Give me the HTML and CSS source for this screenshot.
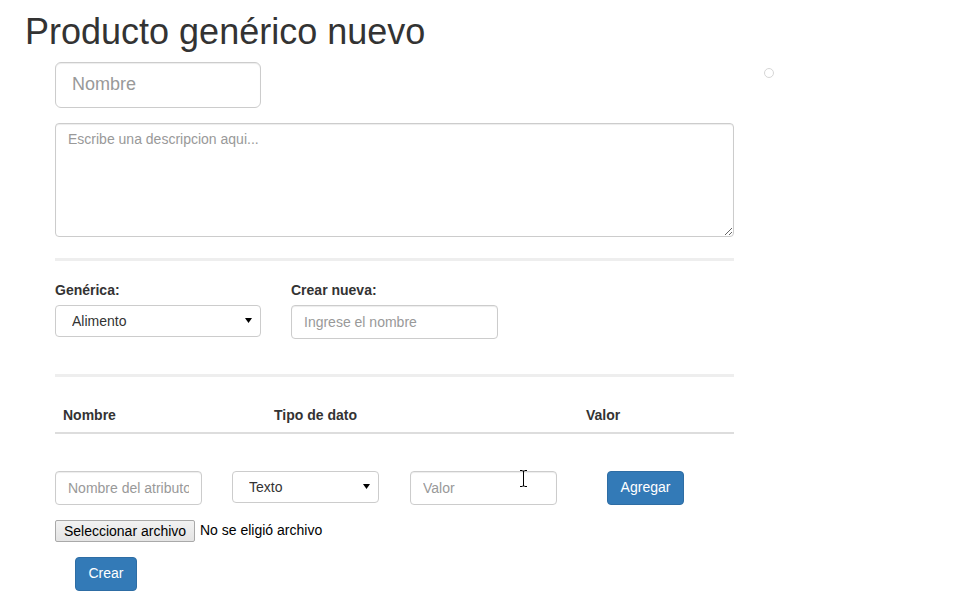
FILE: index.html
```html
<!DOCTYPE html>
<html lang="es">
<head>
<meta charset="utf-8">
<title>Producto genérico nuevo</title>
<link rel="stylesheet" href="styles.css">
</head>
<body>
<h1 class="title">Producto genérico nuevo</h1>
<div class="page">
  <form class="form">
    <input class="form-control input-lg name-input" type="text" placeholder="Nombre">
    <textarea class="form-control desc" placeholder="Escribe una descripcion aqui..."></textarea>
    <div class="sep"></div>
    <div class="pick">
      <div class="pick-col">
        <label class="lbl">Genérica:</label>
        <select class="form-control select sel-gen"><option>Alimento</option></select>
      </div>
      <div class="pick-col">
        <label class="lbl">Crear nueva:</label>
        <input class="form-control new-input" type="text" placeholder="Ingrese el nombre">
      </div>
    </div>
    <div class="sep sep-2"></div>
    <table class="attr-table">
      <thead>
        <tr>
          <th class="c1">Nombre</th>
          <th class="c2">Tipo de dato</th>
          <th class="c3">Valor</th>
        </tr>
      </thead>
    </table>
    <div class="add-row">
      <input class="form-control attr-input" type="text" placeholder="Nombre del atributo">
      <select class="form-control select attr-select"><option>Texto</option></select>
      <input class="form-control attr-input val-input" type="text" placeholder="Valor">
      <button type="button" class="btn btn-primary add-btn">Agregar</button>
    </div>
    <div class="file-row">
      <button type="button" class="file-btn">Seleccionar archivo</button>
      <span class="file-text">No se eligió archivo</span>
    </div>
    <button type="button" class="btn btn-primary create-btn">Crear</button>
  </form>
  <div class="aside"><span class="dot"></span></div>
</div>
<svg class="cursor" width="9" height="17" viewBox="0 0 9 17" aria-hidden="true">
  <path d="M1 0.5h2.5M5.5 0.5H8M4.5 1v15M1 16.5h2.5M5.5 16.5H8M3.5 1h2M3.5 16h2" stroke="#000" stroke-width="1" fill="none"/>
</svg>
</body>
</html>
```
FILE: styles.css
```css
* { box-sizing: border-box; }
html, body { margin: 0; padding: 0; background: #fff; }
body {
  font-family: "Liberation Sans", Arial, sans-serif;
  font-size: 14px;
  line-height: 1.42857;
  color: #333;
}
.title {
  margin: 0;
  padding: 12px 0 0 25px;
  font-size: 36px;
  font-weight: 500;
  line-height: 1.1;
  color: #333;
}
.page {
  display: flex;
  align-items: flex-start;
  margin-top: 10px;
}
.form {
  margin-left: 55px;
  width: 679px;
  display: flex;
  flex-direction: column;
  align-items: flex-start;
}
.form-control {
  display: block;
  height: 34px;
  padding: 6px 12px;
  font-family: inherit;
  font-size: 14px;
  line-height: 1.42857;
  color: #555;
  background: #fff;
  border: 1px solid #ccc;
  border-radius: 4px;
  box-shadow: inset 0 1px 1px rgba(0,0,0,.075);
  margin: 0;
  outline: none;
}
.form-control::placeholder { color: #999; opacity: 1; }
.input-lg {
  height: 46px;
  padding: 10px 16px;
  font-size: 18px;
  line-height: 1.33;
  border-radius: 6px;
}
.name-input { width: 206px; }
.desc {
  width: 679px;
  height: 114px;
  margin-top: 15px;
  resize: vertical;
}
.sep {
  width: 679px;
  height: 0;
  border-top: 3px solid #eee;
  margin-top: 21px;
}
.sep-2 { margin-top: 35px; }
.pick {
  display: flex;
  gap: 30px;
  margin-top: 19px;
}
.pick-col { display: flex; flex-direction: column; align-items: flex-start; }
.lbl {
  font-weight: 700;
  margin-bottom: 5px;
  line-height: 20px;
}
.select {
  -webkit-appearance: none;
  appearance: none;
  height: 32px;
  padding: 6px 16px 4px;
  color: #333;
  background-image: url("data:image/svg+xml;utf8,<svg xmlns='http://www.w3.org/2000/svg' width='7' height='5'><path d='M0 0h7L3.5 5z' fill='%23000'/></svg>");
  background-repeat: no-repeat;
  background-position: right 8px center;
  box-shadow: none;
}
.sel-gen { width: 206px; }
.new-input { width: 207px; }
.attr-table {
  width: 679px;
  margin-top: 20px;
  border-collapse: collapse;
  border-spacing: 0;
}
.attr-table th {
  text-align: left;
  padding: 8px 8px 7px;
  line-height: 20px;
  font-weight: 700;
  border-bottom: 2px solid #ddd;
}
.attr-table .c1 { width: 211px; }
.attr-table .c2 { width: 312px; }
.add-row {
  display: flex;
  align-items: flex-start;
  margin-top: 37px;
}
.attr-input { width: 147px; }
.attr-select { width: 147px; margin-left: 30px; }
.val-input { margin-left: 31px; }
.btn {
  display: inline-block;
  height: 34px;
  padding: 6px 12px;
  font-family: inherit;
  font-size: 14px;
  line-height: 1.42857;
  border: 1px solid transparent;
  border-radius: 4px;
  cursor: pointer;
}
.btn-primary {
  color: #fff;
  background: #337ab7;
  border-color: #2e6da4;
}
.add-btn { margin-left: 50px; width: 77px; }
.file-row {
  display: flex;
  align-items: center;
  margin-top: 15px;
  height: 22px;
}
.file-btn {
  height: 22px;
  width: 140px;
  padding: 0 4px;
  font-family: "Liberation Sans", Arial, sans-serif;
  font-size: 14px;
  color: #000;
  background: linear-gradient(#f2f2f2, #e4e4e4);
  border: 1px solid #a9a9a9;
  border-radius: 2px;
  white-space: nowrap;
}
.file-text {
  margin-left: 5px;
  font-size: 14px;
  color: #000;
}
.create-btn { margin-top: 15px; margin-left: 20px; width: 62px; }
.aside {
  margin-left: 30px;
  padding-top: 6px;
}
.dot {
  display: block;
  width: 10px;
  height: 10px;
  border: 1px solid #d6d6d6;
  border-radius: 50%;
}
.cursor {
  position: absolute;
  left: 519px;
  top: 470px;
}
```
